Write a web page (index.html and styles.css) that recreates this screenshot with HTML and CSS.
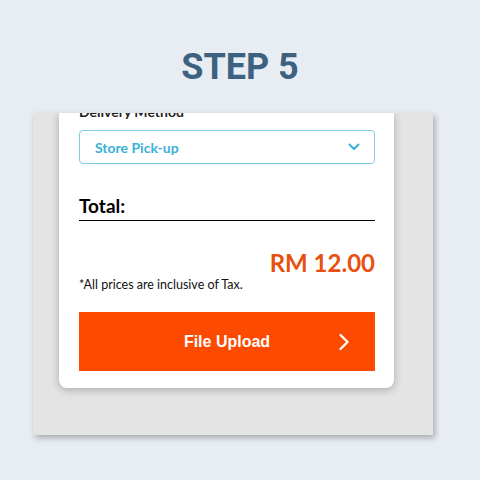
FILE: index.html
```html
<!DOCTYPE html>
<html>
<head>
<meta charset="utf-8">
<link rel="stylesheet" href="styles.css">
</head>
<body>
<h1 class="title">STEP 5</h1>
<div class="panel">
  <div class="card">
    <div class="label">Delivery Method</div>
    <div class="select">
      <span>Store Pick-up</span>
      <svg class="chev" width="12" height="8" viewBox="0 0 12 8"><path d="M1.5 1.5 L6 6 L10.5 1.5" fill="none" stroke="#3bb0d8" stroke-width="2" stroke-linecap="round" stroke-linejoin="round"/></svg>
    </div>
    <div class="total">Total:</div>
    <div class="price">RM 12.00</div>
    <div class="note">*All prices are inclusive of Tax.</div>
    <div class="button">
      <span>File Upload</span>
      <svg class="arrow" width="12" height="18" viewBox="0 0 12 18"><path d="M2.5 2 L9.5 9 L2.5 16" fill="none" stroke="#fff" stroke-width="2.4" stroke-linecap="round" stroke-linejoin="round"/></svg>
    </div>
  </div>
</div>
</body>
</html>
```
FILE: styles.css
```css
html, body {
  margin: 0;
  padding: 0;
  background: #e8ecf3;
  width: 480px;
  height: 480px;
  overflow: hidden;
}
.title {
  margin: 46px 0 0 0;
  height: 42px;
  line-height: 42px;
  font-family: Roboto, "Liberation Sans", sans-serif;
  font-weight: 700;
  font-size: 36px;
  color: #3d6281;
  text-align: center;
}
.panel {
  margin: 25px 0 0 33px;
  width: 400px;
  height: 322px;
  background: #e4e4e4;
  box-shadow: 2px 3px 6px rgba(0, 0, 0, 0.28);
  overflow: hidden;
}
.card {
  display: flow-root;
  margin-left: 26px;
  width: 335px;
  height: 275px;
  box-sizing: border-box;
  background: #fff;
  border-radius: 0 0 8px 8px;
  padding: 0 19px 18px 20px;
  box-shadow: 0 2px 8px rgba(0, 0, 0, 0.25);
  font-family: Lato, "Liberation Sans", sans-serif;
  color: #111;
}
.label {
  margin-top: -9px;
  height: 16px;
  line-height: 16px;
  font-size: 14px;
  font-weight: 700;
  color: #222;
}
.select {
  margin-top: 10px;
  height: 34px;
  box-sizing: border-box;
  border: 1px solid #7fcbe4;
  border-radius: 4px;
  padding: 0 14px 0 15px;
  display: flex;
  align-items: center;
  justify-content: space-between;
  font-size: 14px;
  font-weight: 700;
  color: #3bb0d8;
}
.total {
  margin-top: 30px;
  height: 23px;
  line-height: 23px;
  font-size: 19px;
  font-weight: 700;
  color: #000;
  border-bottom: 1px solid #000;
  padding-bottom: 3px;
}
.price {
  margin-top: 28px;
  height: 28px;
  line-height: 28px;
  font-size: 24px;
  font-weight: 700;
  color: #e8500f;
  text-align: right;
}
.note {
  height: 16px;
  line-height: 16px;
  font-size: 12.5px;
  color: #111;
}
.button {
  margin-top: 19px;
  height: 59px;
  background: #fc4a00;
  position: relative;
  display: flex;
  align-items: center;
  justify-content: center;
  font-family: "Liberation Sans", Arial, sans-serif;
  font-weight: 700;
  font-size: 16px;
  color: #fff;
}
.arrow {
  position: absolute;
  right: 25px;
  top: 21px;
}
```
